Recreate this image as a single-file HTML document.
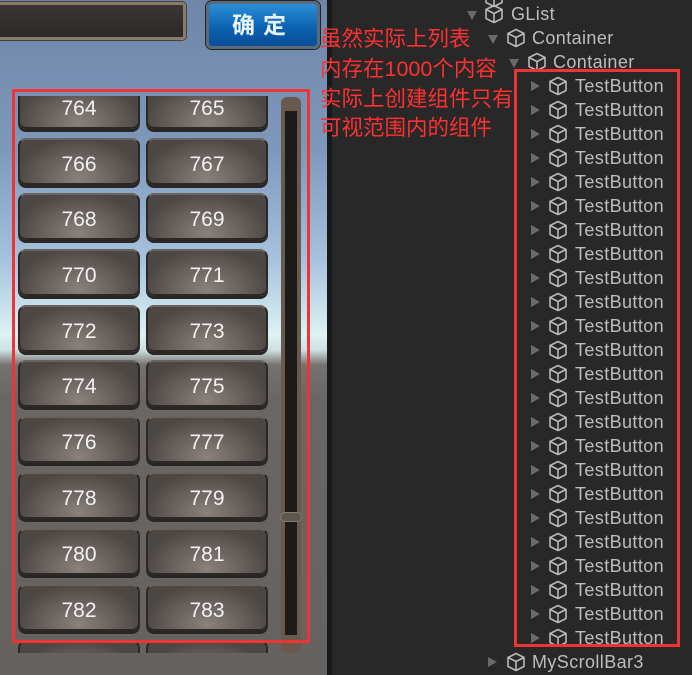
<!DOCTYPE html>
<html><head><meta charset="utf-8"><style>
*{margin:0;padding:0;box-sizing:border-box}
body{width:692px;height:675px;overflow:hidden;background:#282828;position:relative;font-family:"Liberation Sans","Noto Sans CJK SC",sans-serif}
#game{position:absolute;left:0;top:0;width:327px;height:675px;background:linear-gradient(#6e86a8 0px,#7e98bb 150px,#a6c2dd 260px,#dcf2f4 335px,#cfe0e2 350px,#767270 365px,#6a6664 400px,#66625f 675px)}
#sep{position:absolute;left:327px;top:0;width:5px;height:675px;background:#191919}
.inp{position:absolute;left:-10px;top:2px;width:196px;height:38px;background:linear-gradient(#3a3633,#2c2926);border:3px solid #8a7a6c;border-radius:4px;box-shadow:0 0 0 1px #4a4038}
.ok{position:absolute;left:206px;top:1px;width:114px;height:48px;background:linear-gradient(#2b8fd8,#0a5fae 60%,#0a4f98);border:3px solid #5a6a78;border-radius:6px;box-shadow:0 0 0 1px #222;color:#e8f4f8;font-size:23px;font-weight:bold;text-align:center;line-height:42px;letter-spacing:8px;font-family:"Liberation Sans","Noto Sans CJK SC",sans-serif}
#list{position:absolute;left:0;top:96px;width:280px;height:557px;overflow:hidden}
.b{position:absolute;width:122px;height:47px;border-radius:8px;background:radial-gradient(ellipse at 50% 90%,#8a817b,#4d4744 75%);border:2px solid #2c2826;border-top-color:#6a625d;box-shadow:0 3px 0 #2a2624;color:#f2f2f2;font-size:21px;text-align:center;line-height:49px}
.sb{position:absolute;left:281px;top:97px;width:20px;height:556px;background:#6a5a4e;border-radius:6px}
.sb i{position:absolute;left:4px;top:14px;width:12px;height:524px;background:#1d1b1a}
.thumb{position:absolute;left:280px;top:512px;width:22px;height:10px;background:#5e5852;border:1px solid #8a7a6c;border-radius:5px}
.red{position:absolute;border:3px solid #ee3434}
.cn{position:absolute;left:320px;color:#ff3030;font-size:21.5px;line-height:29px;font-family:"Liberation Sans","Noto Sans CJK SC",sans-serif}
.h{position:absolute;height:24px;line-height:24px;color:#bdbdbd;font-size:18px;letter-spacing:0.4px;white-space:nowrap}
.h svg{position:absolute;top:2px}
.arr{position:absolute;top:7px;width:0;height:0}
.ar{border-left:9px solid #6a6a6a;border-top:5px solid transparent;border-bottom:5px solid transparent}
.ad{border-top:9px solid #6a6a6a;border-left:5px solid transparent;border-right:5px solid transparent;top:9px}
#hc{position:absolute;left:0;top:74px;width:692px;height:571px;overflow:hidden}
</style></head><body>
<div id="game">
<div class="inp"></div>
<div class="ok">确定</div>
<div id="list">
<div class="b" style="left:18px;top:-14px">764</div><div class="b" style="left:146px;top:-14px">765</div>
<div class="b" style="left:18px;top:42px">766</div><div class="b" style="left:146px;top:42px">767</div>
<div class="b" style="left:18px;top:97px">768</div><div class="b" style="left:146px;top:97px">769</div>
<div class="b" style="left:18px;top:153px">770</div><div class="b" style="left:146px;top:153px">771</div>
<div class="b" style="left:18px;top:209px">772</div><div class="b" style="left:146px;top:209px">773</div>
<div class="b" style="left:18px;top:264px">774</div><div class="b" style="left:146px;top:264px">775</div>
<div class="b" style="left:18px;top:320px">776</div><div class="b" style="left:146px;top:320px">777</div>
<div class="b" style="left:18px;top:376px">778</div><div class="b" style="left:146px;top:376px">779</div>
<div class="b" style="left:18px;top:432px">780</div><div class="b" style="left:146px;top:432px">781</div>
<div class="b" style="left:18px;top:488px">782</div><div class="b" style="left:146px;top:488px">783</div>
<div class="b" style="left:18px;top:544px">784</div><div class="b" style="left:146px;top:544px">785</div>
</div>
<div class="sb"><i></i></div>
<div class="thumb"></div>
</div>
<div id="sep"></div>
<div class="red" style="left:12px;top:89px;width:298px;height:554px"></div>
<div class="cn" style="top:25px">虽然实际上列表</div>
<div class="cn" style="top:55px">内存在1000个内容</div>
<div class="cn" style="top:85px">实际上创建组件只有</div>
<div class="cn" style="top:114px">可视范围内的组件</div>

<svg width="0" height="0" style="position:absolute"><defs><symbol id="cube" viewBox="0 0 20 20"><path d="M10 1.5L18 5.5V14.5L10 18.5L2 14.5V5.5Z M2 5.5L10 9.5L18 5.5 M10 9.5V18.5" fill="none" stroke="#b8b8b8" stroke-width="1.6" stroke-linejoin="round"/></symbol></defs></svg>

<div class="h" style="left:0;top:-14px;width:692px"><svg style="left:484px" width="20" height="20"><use href="#cube"/></svg></div>
<div class="h" style="left:0;top:2px;width:692px"><span class="arr ad" style="left:467px"></span><svg style="left:484px" width="20" height="20"><use href="#cube"/></svg><span style="position:absolute;left:511px">GList</span></div>
<div class="h" style="left:0;top:26px;width:692px"><span class="arr ad" style="left:488px"></span><svg style="left:506px" width="20" height="20"><use href="#cube"/></svg><span style="position:absolute;left:532px">Container</span></div>
<div class="h" style="left:0;top:50px;width:692px"><span class="arr ad" style="left:509px"></span><svg style="left:527px" width="20" height="20"><use href="#cube"/></svg><span style="position:absolute;left:553px">Container</span></div>
<div id="hc">
<div class="h" style="top:0;width:692px"><span class="arr ar" style="left:531px"></span><svg style="left:548px" width="20" height="20"><use href="#cube"/></svg><span style="position:absolute;left:575px">TestButton</span></div>
<div class="h" style="top:24px;width:692px"><span class="arr ar" style="left:531px"></span><svg style="left:548px" width="20" height="20"><use href="#cube"/></svg><span style="position:absolute;left:575px">TestButton</span></div>
<div class="h" style="top:48px;width:692px"><span class="arr ar" style="left:531px"></span><svg style="left:548px" width="20" height="20"><use href="#cube"/></svg><span style="position:absolute;left:575px">TestButton</span></div>
<div class="h" style="top:72px;width:692px"><span class="arr ar" style="left:531px"></span><svg style="left:548px" width="20" height="20"><use href="#cube"/></svg><span style="position:absolute;left:575px">TestButton</span></div>
<div class="h" style="top:96px;width:692px"><span class="arr ar" style="left:531px"></span><svg style="left:548px" width="20" height="20"><use href="#cube"/></svg><span style="position:absolute;left:575px">TestButton</span></div>
<div class="h" style="top:120px;width:692px"><span class="arr ar" style="left:531px"></span><svg style="left:548px" width="20" height="20"><use href="#cube"/></svg><span style="position:absolute;left:575px">TestButton</span></div>
<div class="h" style="top:144px;width:692px"><span class="arr ar" style="left:531px"></span><svg style="left:548px" width="20" height="20"><use href="#cube"/></svg><span style="position:absolute;left:575px">TestButton</span></div>
<div class="h" style="top:168px;width:692px"><span class="arr ar" style="left:531px"></span><svg style="left:548px" width="20" height="20"><use href="#cube"/></svg><span style="position:absolute;left:575px">TestButton</span></div>
<div class="h" style="top:192px;width:692px"><span class="arr ar" style="left:531px"></span><svg style="left:548px" width="20" height="20"><use href="#cube"/></svg><span style="position:absolute;left:575px">TestButton</span></div>
<div class="h" style="top:216px;width:692px"><span class="arr ar" style="left:531px"></span><svg style="left:548px" width="20" height="20"><use href="#cube"/></svg><span style="position:absolute;left:575px">TestButton</span></div>
<div class="h" style="top:240px;width:692px"><span class="arr ar" style="left:531px"></span><svg style="left:548px" width="20" height="20"><use href="#cube"/></svg><span style="position:absolute;left:575px">TestButton</span></div>
<div class="h" style="top:264px;width:692px"><span class="arr ar" style="left:531px"></span><svg style="left:548px" width="20" height="20"><use href="#cube"/></svg><span style="position:absolute;left:575px">TestButton</span></div>
<div class="h" style="top:288px;width:692px"><span class="arr ar" style="left:531px"></span><svg style="left:548px" width="20" height="20"><use href="#cube"/></svg><span style="position:absolute;left:575px">TestButton</span></div>
<div class="h" style="top:312px;width:692px"><span class="arr ar" style="left:531px"></span><svg style="left:548px" width="20" height="20"><use href="#cube"/></svg><span style="position:absolute;left:575px">TestButton</span></div>
<div class="h" style="top:336px;width:692px"><span class="arr ar" style="left:531px"></span><svg style="left:548px" width="20" height="20"><use href="#cube"/></svg><span style="position:absolute;left:575px">TestButton</span></div>
<div class="h" style="top:360px;width:692px"><span class="arr ar" style="left:531px"></span><svg style="left:548px" width="20" height="20"><use href="#cube"/></svg><span style="position:absolute;left:575px">TestButton</span></div>
<div class="h" style="top:384px;width:692px"><span class="arr ar" style="left:531px"></span><svg style="left:548px" width="20" height="20"><use href="#cube"/></svg><span style="position:absolute;left:575px">TestButton</span></div>
<div class="h" style="top:408px;width:692px"><span class="arr ar" style="left:531px"></span><svg style="left:548px" width="20" height="20"><use href="#cube"/></svg><span style="position:absolute;left:575px">TestButton</span></div>
<div class="h" style="top:432px;width:692px"><span class="arr ar" style="left:531px"></span><svg style="left:548px" width="20" height="20"><use href="#cube"/></svg><span style="position:absolute;left:575px">TestButton</span></div>
<div class="h" style="top:456px;width:692px"><span class="arr ar" style="left:531px"></span><svg style="left:548px" width="20" height="20"><use href="#cube"/></svg><span style="position:absolute;left:575px">TestButton</span></div>
<div class="h" style="top:480px;width:692px"><span class="arr ar" style="left:531px"></span><svg style="left:548px" width="20" height="20"><use href="#cube"/></svg><span style="position:absolute;left:575px">TestButton</span></div>
<div class="h" style="top:504px;width:692px"><span class="arr ar" style="left:531px"></span><svg style="left:548px" width="20" height="20"><use href="#cube"/></svg><span style="position:absolute;left:575px">TestButton</span></div>
<div class="h" style="top:528px;width:692px"><span class="arr ar" style="left:531px"></span><svg style="left:548px" width="20" height="20"><use href="#cube"/></svg><span style="position:absolute;left:575px">TestButton</span></div>
<div class="h" style="top:552px;width:692px"><span class="arr ar" style="left:531px"></span><svg style="left:548px" width="20" height="20"><use href="#cube"/></svg><span style="position:absolute;left:575px">TestButton</span></div>
</div>
<div class="h" style="left:0;top:650px;width:692px"><span class="arr ar" style="left:488px"></span><svg style="left:506px" width="20" height="20"><use href="#cube"/></svg><span style="position:absolute;left:532px">MyScrollBar3</span></div>
<div class="red" style="left:514px;top:69px;width:166px;height:578px"></div>
</body></html>
